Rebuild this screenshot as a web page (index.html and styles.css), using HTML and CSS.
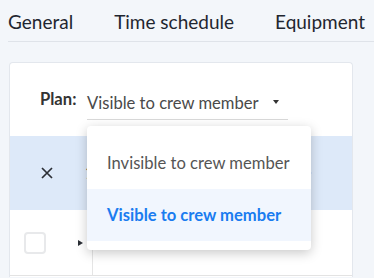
FILE: index.html
```html
<!DOCTYPE html>
<html>
<head>
<meta charset="utf-8">
<link rel="stylesheet" href="styles.css">
</head>
<body>
<nav class="tabs">
  <span class="tab">General</span>
  <span class="tab">Time schedule</span>
  <span class="tab">Equipment</span>
</nav>
<section class="card">
  <div class="plan">
    <span class="plan-label">Plan:</span>
    <div class="select">
      <span class="select-value">Visible to crew member</span>
      <span class="caret"></span>
    </div>
  </div>
  <div class="row row-selected">
    <span class="cell-check">
      <svg width="14" height="14" viewBox="0 0 14 14"><path d="M2 2 L12 12 M12 2 L2 12" stroke="#2b2f36" stroke-width="1.7" fill="none"/></svg>
    </span>
    <span class="sel-count">1</span>
    <span class="sel-action">
      <svg width="8" height="12" viewBox="0 0 8 12"><path d="M1.5 1.5 L6 6 L1.5 10.5" stroke="#1a73e8" stroke-width="2" fill="none"/></svg>
    </span>
  </div>
  <div class="row row-item">
    <span class="cell-check"><span class="checkbox"></span></span>
    <span class="cell-expand"><span class="tri"></span></span>
    <span class="cell-rest"></span>
  </div>
  <ul class="menu">
    <li class="menu-item">Invisible to crew member</li>
    <li class="menu-item active">Visible to crew member</li>
  </ul>
</section>
</body>
</html>
```

FILE: styles.css
```css
html, body {
  margin: 0;
  padding: 0;
}
body {
  background: #f3f6fa;
  font-family: "Lato", "Open Sans", sans-serif;
  color: #1f2630;
  width: 374px;
  height: 278px;
  overflow: hidden;
}
.tabs {
  display: flex;
  gap: 41px;
  margin-left: 8px;
  height: 42px;
  border-bottom: 1px solid #dfe3e9;
  box-sizing: border-box;
  align-items: center;
  padding-top: 1px;
  font-size: 19px;
  white-space: nowrap;
}
.card {
  position: relative;
  margin: 20px 0 0 9px;
  width: 344px;
  height: 215px;
  background: #fff;
  border: 1px solid #e3e7ed;
  border-bottom: 0;
  border-radius: 4px 4px 0 0;
  box-sizing: border-box;
}
.plan {
  display: flex;
  align-items: flex-start;
  padding: 23px 0 0 30px;
  height: 73px;
  box-sizing: border-box;
  font-size: 16.6px;
}
.plan-label {
  font-weight: 700;
  color: #333;
  width: 47px;
  padding-top: 3px;
}
.select {
  display: flex;
  align-items: center;
  width: 201px;
  height: 34px;
  border-bottom: 1px solid #d9d9d9;
  box-sizing: border-box;
  color: #4a4a4a;
}
.select-value {
  flex: 1;
}
.caret {
  width: 0;
  height: 0;
  border-left: 3.5px solid transparent;
  border-right: 3.5px solid transparent;
  border-top: 4px solid #333;
  margin-right: 9px;
  margin-top: -2px;
}
.row {
  display: flex;
  align-items: center;
}
.row-selected {
  height: 74px;
  background: #dde9f9;
}
.cell-check {
  width: 73px;
  display: flex;
  justify-content: center;
}
.sel-count {
  font-size: 16.6px;
  color: #333;
  flex: 1;
  padding-left: 2px;
}
.sel-action {
  width: 48px;
  display: flex;
}
.row-item {
  height: 65px;
  border-bottom: 1px solid #e3e3e3;
  align-items: stretch;
}
.row-item .cell-check {
  align-items: center;
  width: 50px;
}
.checkbox {
  width: 22px;
  height: 22px;
  border: 2px solid #e8e9eb;
  border-radius: 4px;
  box-sizing: border-box;
}
.cell-expand {
  width: 33px;
  display: flex;
  align-items: center;
  justify-content: flex-end;
  padding-right: 9px;
  border-right: 1px solid #e5e5e5;
  box-sizing: border-box;
}
.tri {
  width: 0;
  height: 0;
  border-top: 3.5px solid transparent;
  border-bottom: 3.5px solid transparent;
  border-left: 5px solid #2b2f36;
}
.cell-rest {
  flex: 1;
}
.menu {
  position: absolute;
  left: 77px;
  top: 63px;
  width: 224px;
  margin: 0;
  padding: 11px 0 9px;
  list-style: none;
  background: #fff;
  border-radius: 4px;
  box-shadow: 0 3px 12px rgba(0, 0, 0, 0.22);
  font-size: 16.6px;
}
.menu-item {
  height: 52px;
  display: flex;
  align-items: center;
  padding-left: 20px;
  color: #555;
  white-space: nowrap;
}
.menu-item.active {
  background: #f1f6fe;
  color: #1a7cf0;
  font-weight: 700;
}
```
